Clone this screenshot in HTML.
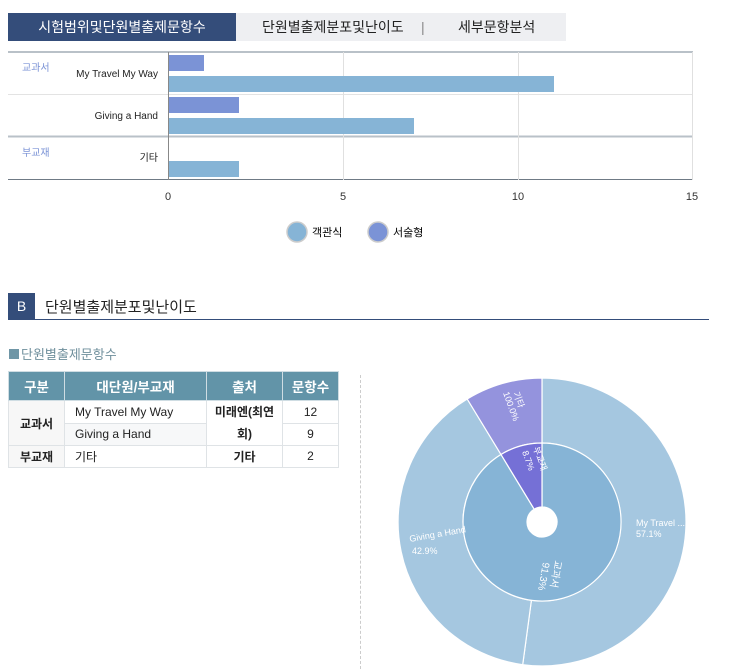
<!DOCTYPE html>
<html><head><meta charset="utf-8"><style>
*{margin:0;padding:0;box-sizing:border-box}
body{width:743px;height:669px;background:#fff;position:relative;overflow:hidden;font-family:"Liberation Sans","Noto Sans CJK KR",sans-serif;color:#222}
.a{position:absolute}
table{border-collapse:collapse;position:absolute;left:8px;top:371px;width:331px;font-size:12px}
td,th{border:1px solid #dfe3e6;text-align:center;height:21.5px}
th{background:#6294a8;color:#fff;font-weight:bold;font-size:13.5px;height:29px;border-color:#cfdde3}
</style></head><body>
<div class="a" style="left:8px;top:13px;width:228px;height:28px;background:#344d7a;color:#fff;font-size:14px;line-height:28px;text-align:center">시험범위및단원별출제문항수</div>
<div class="a" style="left:236px;top:13px;width:330px;height:28px;background:#eeeff2;font-size:14px;line-height:28px"><span class="a" style="left:26px">단원별출제분포및난이도</span><span class="a" style="left:185px;color:#888">|</span><span class="a" style="left:222px">세부문항분석</span></div>
<svg class="a" style="left:0;top:0" width="743" height="250">
<line x1="8" y1="52" x2="693" y2="52" stroke="#b9c1c8" stroke-width="2"/>
<line x1="8" y1="94.5" x2="693" y2="94.5" stroke="#e3e3e3"/>
<line x1="8" y1="136.5" x2="693" y2="136.5" stroke="#b9c1c8" stroke-width="2"/>
<line x1="8" y1="179.5" x2="693" y2="179.5" stroke="#6f7a85" stroke-width="1"/>
<line x1="168.5" y1="52" x2="168.5" y2="180" stroke="#888"/>
<line x1="343.5" y1="52" x2="343.5" y2="180" stroke="#e0e0e0"/>
<line x1="518.5" y1="52" x2="518.5" y2="180" stroke="#e0e0e0"/>
<line x1="692.5" y1="52" x2="692.5" y2="180" stroke="#e0e0e0"/>
<rect x="169" y="55" width="35" height="16" fill="#7b93d6"/>
<rect x="169" y="76" width="385" height="16" fill="#86b4d6"/>
<rect x="169" y="97" width="70" height="16" fill="#7b93d6"/>
<rect x="169" y="118" width="245" height="16" fill="#86b4d6"/>
<rect x="169" y="161" width="70" height="16" fill="#86b4d6"/>
<g font-size="10" fill="#7b93d6"><text x="22" y="71">교과서</text><text x="22" y="156">부교재</text></g>
<g font-size="10" fill="#222" text-anchor="end"><text x="158" y="77">My Travel My Way</text><text x="158" y="119">Giving a Hand</text><text x="158" y="161">기타</text></g>
<g font-size="11" fill="#333" text-anchor="middle"><text x="168" y="200">0</text><text x="343" y="200">5</text><text x="518" y="200">10</text><text x="692" y="200">15</text></g>
<circle cx="297" cy="232" r="10" fill="#86b4d6" stroke="#ccc" stroke-width="1.5"/>
<text x="312" y="236" font-size="11">객관식</text>
<circle cx="378" cy="232" r="10" fill="#7b93d6" stroke="#ccc" stroke-width="1.5"/>
<text x="393" y="236" font-size="11">서술형</text>
</svg>
<div class="a" style="left:8px;top:293px;width:27px;height:26px;background:#344d7a;color:#fff;font-size:14px;line-height:26px;text-align:center">B</div>
<div class="a" style="left:45px;top:296px;font-size:15px">단원별출제분포및난이도</div>
<div class="a" style="left:8px;top:319px;width:701px;height:1px;background:#344d7a"></div>
<div class="a" style="left:9px;top:344px;font-size:13px;color:#6f8f9c"><span style="display:inline-block;width:10px;height:10px;background:#6f96a6;margin-right:2px"></span>단원별출제문항수</div>
<table>
<tr><th style="width:56px">구분</th><th style="width:142px">대단원/부교재</th><th style="width:76px">출처</th><th>문항수</th></tr>
<tr><td rowspan="2" style="background:#f7f7f7;font-weight:bold">교과서</td><td style="text-align:left;padding-left:10px">My Travel My Way</td><td rowspan="2" style="font-weight:bold;line-height:22px">미래엔(최연<br>회)</td><td>12</td></tr>
<tr><td style="text-align:left;padding-left:10px;background:#f7f8f9">Giving a Hand</td><td>9</td></tr>
<tr><td style="background:#f7f7f7;font-weight:bold">부교재</td><td style="text-align:left;padding-left:10px">기타</td><td style="font-weight:bold">기타</td><td>2</td></tr>
</table>
<div class="a" style="left:360px;top:375px;width:0;height:294px;border-left:1px dashed #ccc"></div>
<svg class="a" style="left:0;top:0" width="743" height="669">
<g stroke="#fff" stroke-width="1.2">
<path d="M542 378 A144 144 0 1 1 522.7 664.7 L531.4 600.3 A79 79 0 1 0 542 443 Z" fill="#a5c7e0"/>
<path d="M522.7 664.7 A144 144 0 0 1 467.2 399 L501 454.5 A79 79 0 0 0 531.4 600.3 Z" fill="#a5c7e0"/>
<path d="M467.2 399 A144 144 0 0 1 542 378 L542 443 A79 79 0 0 0 501 454.5 Z" fill="#9493dd"/>
<path d="M542 443 A79 79 0 1 1 501 454.5 L534.2 509.2 A15 15 0 1 0 542 507 Z" fill="#86b4d6"/>
<path d="M501 454.5 A79 79 0 0 1 542 443 L542 507 A15 15 0 0 0 534.2 509.2 Z" fill="#7570d6"/>
</g>
<g font-size="9" fill="#fff">
<text x="636" y="526">My Travel ...</text><text x="636" y="537">57.1%</text>
<text x="410" y="542" transform="rotate(-10 410 542)">Giving a Hand</text><text x="412" y="554">42.9%</text>
<text transform="translate(513 393) rotate(70)">기타</text><text transform="translate(503 393) rotate(70)">100.0%</text>
<text transform="translate(533 448) rotate(70)">부교재</text><text transform="translate(522 452) rotate(70)">8.7%</text>
<text transform="translate(555 560) rotate(100)" font-size="10">교과서</text><text transform="translate(543 562) rotate(100)" font-size="10">91.3%</text>
</g>
</svg>
</body></html>
